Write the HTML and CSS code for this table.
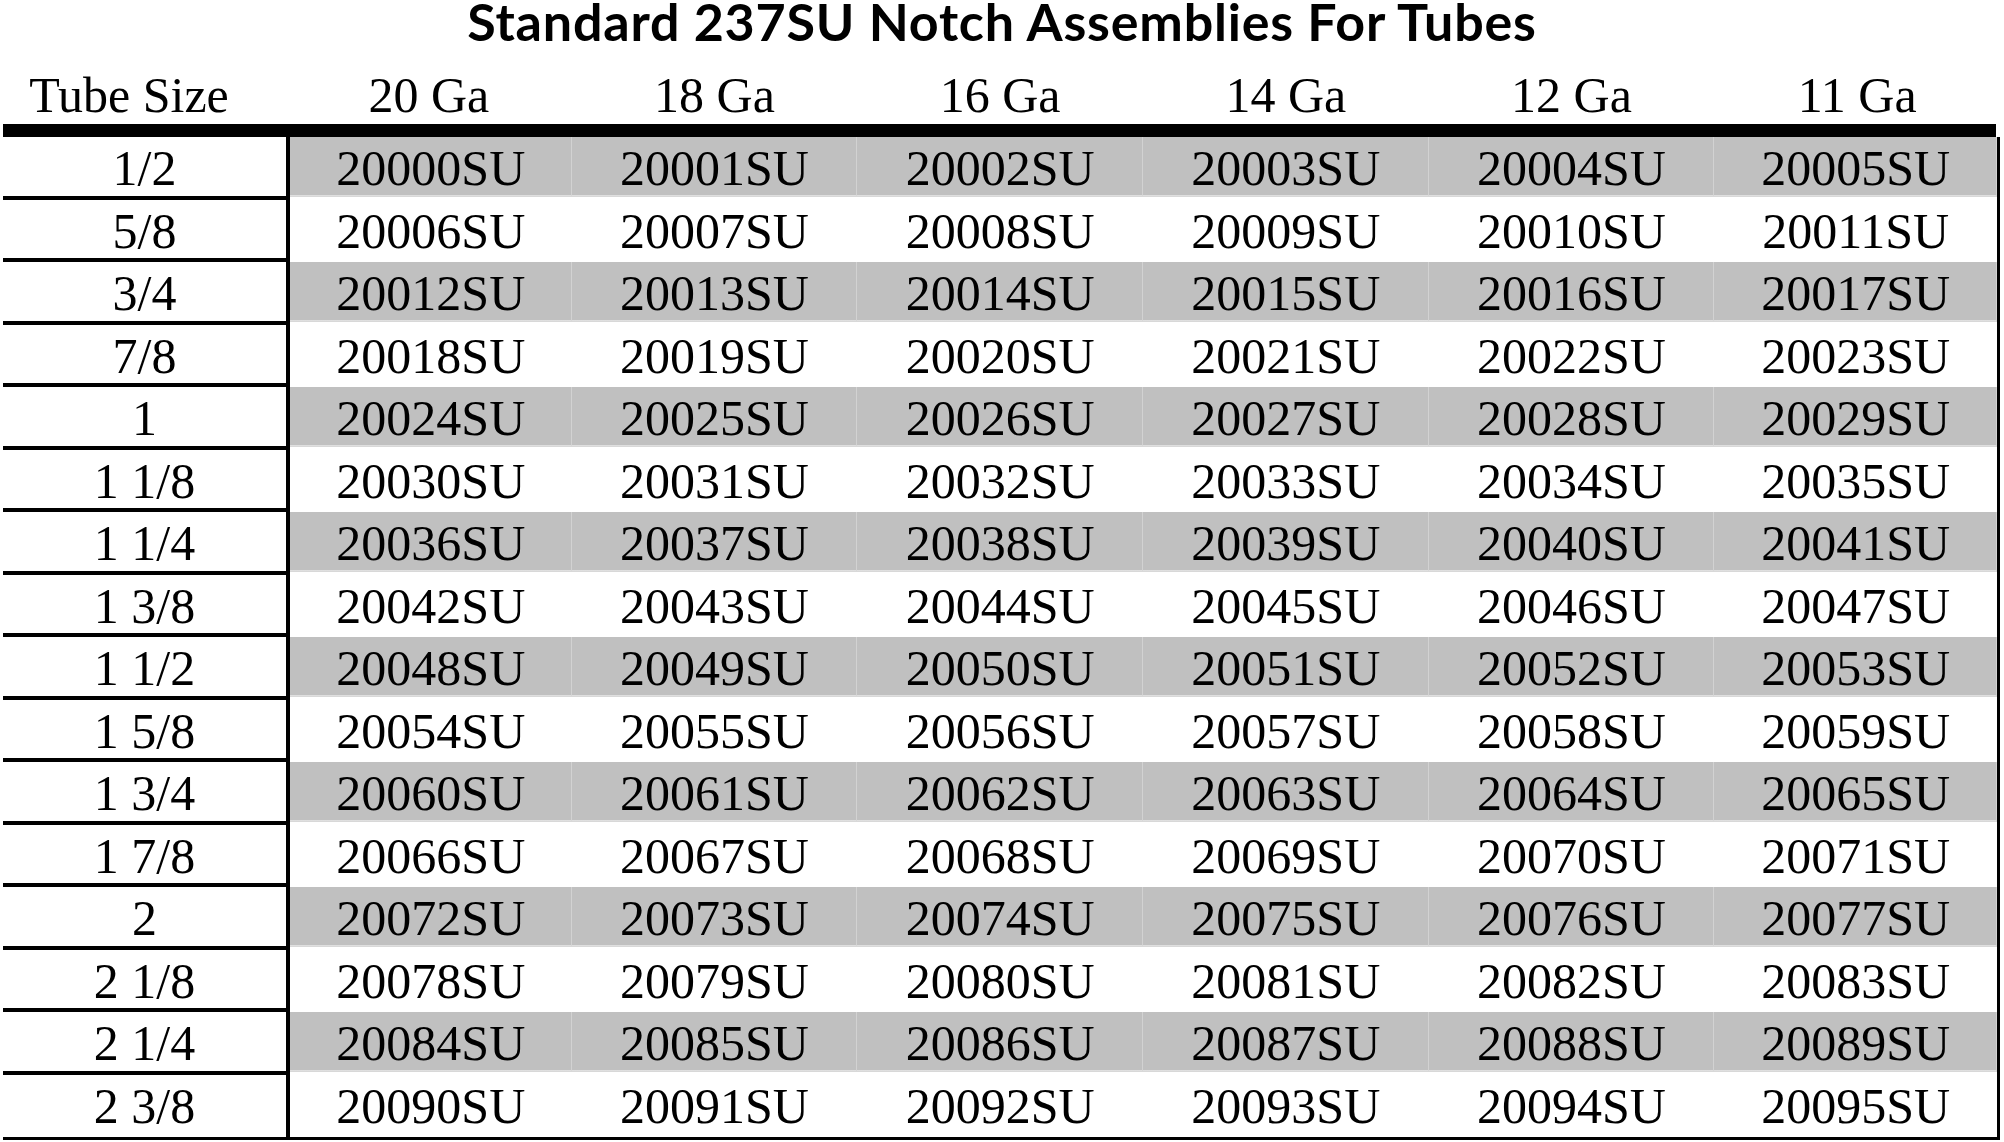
FILE: index.html
```html
<!DOCTYPE html>
<html lang="en">
<head>
<meta charset="utf-8">
<title>Standard 237SU Notch Assemblies For Tubes</title>
<link rel="stylesheet" href="styles.css">
</head>
<body>
<div class="page">
  <h1 class="title">Standard 237SU Notch Assemblies For Tubes</h1>
  <div class="sheet">
    <div class="head head-size">Tube Size</div>
    <div class="head">20 Ga</div>
    <div class="head">18 Ga</div>
    <div class="head">16 Ga</div>
    <div class="head">14 Ga</div>
    <div class="head">12 Ga</div>
    <div class="head">11 Ga</div>
    <div class="bar"></div>

    <div class="size">1/2</div>
    <div class="cell alt first">20000SU</div><div class="cell alt">20001SU</div><div class="cell alt">20002SU</div><div class="cell alt">20003SU</div><div class="cell alt">20004SU</div><div class="cell alt last">20005SU</div>

    <div class="size">5/8</div>
    <div class="cell first">20006SU</div><div class="cell">20007SU</div><div class="cell">20008SU</div><div class="cell">20009SU</div><div class="cell">20010SU</div><div class="cell last">20011SU</div>

    <div class="size">3/4</div>
    <div class="cell alt first">20012SU</div><div class="cell alt">20013SU</div><div class="cell alt">20014SU</div><div class="cell alt">20015SU</div><div class="cell alt">20016SU</div><div class="cell alt last">20017SU</div>

    <div class="size">7/8</div>
    <div class="cell first">20018SU</div><div class="cell">20019SU</div><div class="cell">20020SU</div><div class="cell">20021SU</div><div class="cell">20022SU</div><div class="cell last">20023SU</div>

    <div class="size">1</div>
    <div class="cell alt first">20024SU</div><div class="cell alt">20025SU</div><div class="cell alt">20026SU</div><div class="cell alt">20027SU</div><div class="cell alt">20028SU</div><div class="cell alt last">20029SU</div>

    <div class="size">1 1/8</div>
    <div class="cell first">20030SU</div><div class="cell">20031SU</div><div class="cell">20032SU</div><div class="cell">20033SU</div><div class="cell">20034SU</div><div class="cell last">20035SU</div>

    <div class="size">1 1/4</div>
    <div class="cell alt first">20036SU</div><div class="cell alt">20037SU</div><div class="cell alt">20038SU</div><div class="cell alt">20039SU</div><div class="cell alt">20040SU</div><div class="cell alt last">20041SU</div>

    <div class="size">1 3/8</div>
    <div class="cell first">20042SU</div><div class="cell">20043SU</div><div class="cell">20044SU</div><div class="cell">20045SU</div><div class="cell">20046SU</div><div class="cell last">20047SU</div>

    <div class="size">1 1/2</div>
    <div class="cell alt first">20048SU</div><div class="cell alt">20049SU</div><div class="cell alt">20050SU</div><div class="cell alt">20051SU</div><div class="cell alt">20052SU</div><div class="cell alt last">20053SU</div>

    <div class="size">1 5/8</div>
    <div class="cell first">20054SU</div><div class="cell">20055SU</div><div class="cell">20056SU</div><div class="cell">20057SU</div><div class="cell">20058SU</div><div class="cell last">20059SU</div>

    <div class="size">1 3/4</div>
    <div class="cell alt first">20060SU</div><div class="cell alt">20061SU</div><div class="cell alt">20062SU</div><div class="cell alt">20063SU</div><div class="cell alt">20064SU</div><div class="cell alt last">20065SU</div>

    <div class="size">1 7/8</div>
    <div class="cell first">20066SU</div><div class="cell">20067SU</div><div class="cell">20068SU</div><div class="cell">20069SU</div><div class="cell">20070SU</div><div class="cell last">20071SU</div>

    <div class="size">2</div>
    <div class="cell alt first">20072SU</div><div class="cell alt">20073SU</div><div class="cell alt">20074SU</div><div class="cell alt">20075SU</div><div class="cell alt">20076SU</div><div class="cell alt last">20077SU</div>

    <div class="size">2 1/8</div>
    <div class="cell first">20078SU</div><div class="cell">20079SU</div><div class="cell">20080SU</div><div class="cell">20081SU</div><div class="cell">20082SU</div><div class="cell last">20083SU</div>

    <div class="size">2 1/4</div>
    <div class="cell alt first">20084SU</div><div class="cell alt">20085SU</div><div class="cell alt">20086SU</div><div class="cell alt">20087SU</div><div class="cell alt">20088SU</div><div class="cell alt last">20089SU</div>

    <div class="size size-last">2 3/8</div>
    <div class="cell first">20090SU</div><div class="cell">20091SU</div><div class="cell">20092SU</div><div class="cell">20093SU</div><div class="cell">20094SU</div><div class="cell last">20095SU</div>

    <div class="foot"></div>
  </div>
</div>
</body>
</html>
```

FILE: styles.css
```css
* {
  box-sizing: border-box;
}

body {
  margin: 0;
  background: #ffffff;
  color: #000000;
  font-family: "Liberation Serif", "Times New Roman", serif;
}

.page {
  width: 2004px;
  height: 1142px;
  overflow: hidden;
}

.title {
  margin: 0;
  height: 41px;
  font-family: Lato, "Open Sans", sans-serif;
  font-weight: 700;
  font-size: 52px;
  line-height: 42px;
  letter-spacing: 0.8px;
  text-align: center;
  white-space: nowrap;
}

.sheet {
  margin-left: 3px;
  width: 1997px;
  display: grid;
  grid-template-columns: 283px repeat(6, 1fr);
}

.head {
  height: 83px;
  display: flex;
  align-items: flex-end;
  justify-content: center;
  font-size: 50px;
  line-height: normal;
  white-space: nowrap;
}

.head-size {
  padding-right: 31px;
}

.bar {
  grid-column: 1 / -1;
  height: 13px;
  margin-right: 4px;
  background: #000000;
}

.size,
.cell {
  height: 62.5px;
  padding-top: 6px;
  font-size: 50px;
  line-height: 50px;
  text-align: center;
  white-space: nowrap;
}

.size {
  border-bottom: 4px solid #000000;
}

.size-last {
  border-bottom: none;
}

.alt {
  background:
    linear-gradient(#d2d2d2, #d2d2d2) right top / 1px 58.5px no-repeat,
    linear-gradient(#c0c0c0, #c0c0c0) left top / 100% 58.5px no-repeat,
    linear-gradient(#d8d8d8, #d8d8d8) left 58.5px / 100% 1px no-repeat;
}

.first {
  border-left: 4px solid #000000;
}

.last {
  border-right: 3px solid #000000;
}

.foot {
  grid-column: 1 / -1;
  height: 3px;
  background: #000000;
}
```
